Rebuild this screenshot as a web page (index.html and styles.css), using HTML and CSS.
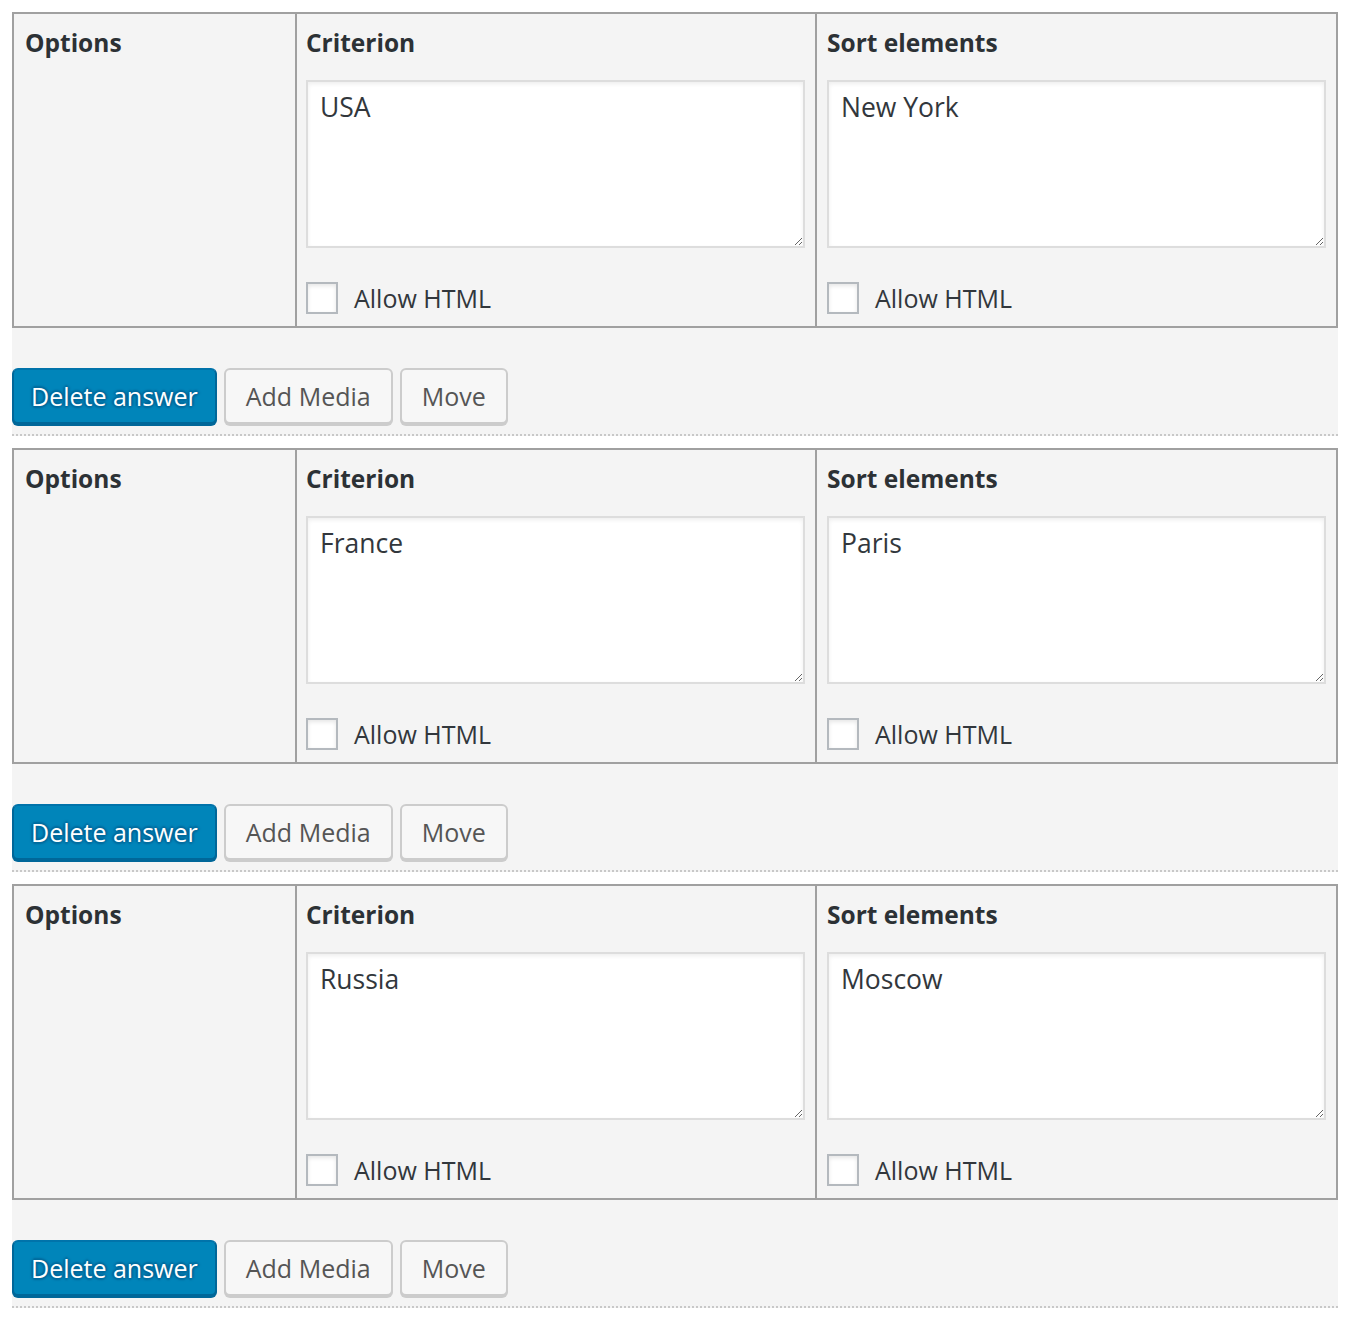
FILE: index.html
```html
<!DOCTYPE html>
<html>
<head>
<meta charset="utf-8">
<link rel="stylesheet" href="styles.css">
</head>
<body>
<div class="answer">
  <div class="grid">
    <div class="cell"><h4 class="title">Options</h4></div>
    <div class="cell"><h4 class="title">Criterion</h4><textarea class="field">USA</textarea><label class="allow"><span class="cb"></span>Allow HTML</label></div>
    <div class="cell"><h4 class="title">Sort elements</h4><textarea class="field">New York</textarea><label class="allow"><span class="cb"></span>Allow HTML</label></div>
  </div>
  <div class="actions"><button class="btn primary">Delete answer</button><button class="btn">Add Media</button><button class="btn">Move</button></div>
</div>
<div class="answer">
  <div class="grid">
    <div class="cell"><h4 class="title">Options</h4></div>
    <div class="cell"><h4 class="title">Criterion</h4><textarea class="field">France</textarea><label class="allow"><span class="cb"></span>Allow HTML</label></div>
    <div class="cell"><h4 class="title">Sort elements</h4><textarea class="field">Paris</textarea><label class="allow"><span class="cb"></span>Allow HTML</label></div>
  </div>
  <div class="actions"><button class="btn primary">Delete answer</button><button class="btn">Add Media</button><button class="btn">Move</button></div>
</div>
<div class="answer">
  <div class="grid">
    <div class="cell"><h4 class="title">Options</h4></div>
    <div class="cell"><h4 class="title">Criterion</h4><textarea class="field">Russia</textarea><label class="allow"><span class="cb"></span>Allow HTML</label></div>
    <div class="cell"><h4 class="title">Sort elements</h4><textarea class="field">Moscow</textarea><label class="allow"><span class="cb"></span>Allow HTML</label></div>
  </div>
  <div class="actions"><button class="btn primary">Delete answer</button><button class="btn">Add Media</button><button class="btn">Move</button></div>
</div>
</body>
</html>
```
FILE: styles.css
```css
html, body { margin: 0; padding: 0; background: #fff; }
body {
  padding: 12px 17px 0 12px;
  font-family: "Open Sans", "Noto Sans", sans-serif;
  color: #32373c;
}
.answer {
  background: #f4f4f4;
  border-bottom: 2px dotted #c8c8c8;
  margin-bottom: 12px;
}
.grid {
  display: grid;
  grid-template-columns: 281px 520px 1fr;
  border: 2px solid #a0a0a0;
}
.cell {
  display: flex;
  flex-direction: column;
  align-items: stretch;
  padding: 12px 10px 12px 10px;
  min-height: 312px;
  box-sizing: border-box;
}
.cell + .cell { border-left: 2px solid #a0a0a0; padding-left: 9px; }
.cell:last-child { padding-left: 10px; }
.cell:first-child { padding-left: 11px; }
.title {
  margin: 0;
  font-size: 24.5px;
  line-height: 34px;
  font-weight: 700;
  color: #2c3135;
}
.field {
  margin: 20px 0 0 0;
  height: 168px;
  box-sizing: border-box;
  border: 2px solid #ddd;
  box-shadow: inset 0 2px 4px rgba(0,0,0,0.07);
  background: #fff;
  padding: 8px 12px 5px 12px;
  font-family: inherit;
  font-size: 26.5px;
  line-height: 34px;
  color: #32373c;
  outline: none;
}
.allow {
  margin-top: auto;
  display: flex;
  align-items: center;
  gap: 16px;
  font-size: 25px;
  line-height: 32px;
  color: #32373c;
}
.cb {
  width: 32px;
  height: 32px;
  box-sizing: border-box;
  border: 2px solid #b4b9be;
  background: #fff;
  box-shadow: inset 0 2px 4px rgba(0,0,0,0.1);
}
.actions {
  display: flex;
  gap: 7px;
  padding: 40px 0 10px 0;
}
.btn {
  font-family: inherit;
  font-size: 25px;
  height: 56px;
  padding: 0 20px;
  border: 2px solid #ccc;
  border-radius: 6px;
  background: #f7f7f7;
  color: #555;
  box-shadow: 0 2px 0 #ccc;
  margin: 0;
}
.btn.primary {
  padding: 0 17px;
  background: #0085ba;
  border-color: #0073aa #006799 #006799;
  box-shadow: 0 2px 0 #006799;
  color: #fff;
  text-shadow: 0 -2px 2px #006799, 2px 0 2px #006799, 0 2px 2px #006799, -2px 0 2px #006799;
}
```
